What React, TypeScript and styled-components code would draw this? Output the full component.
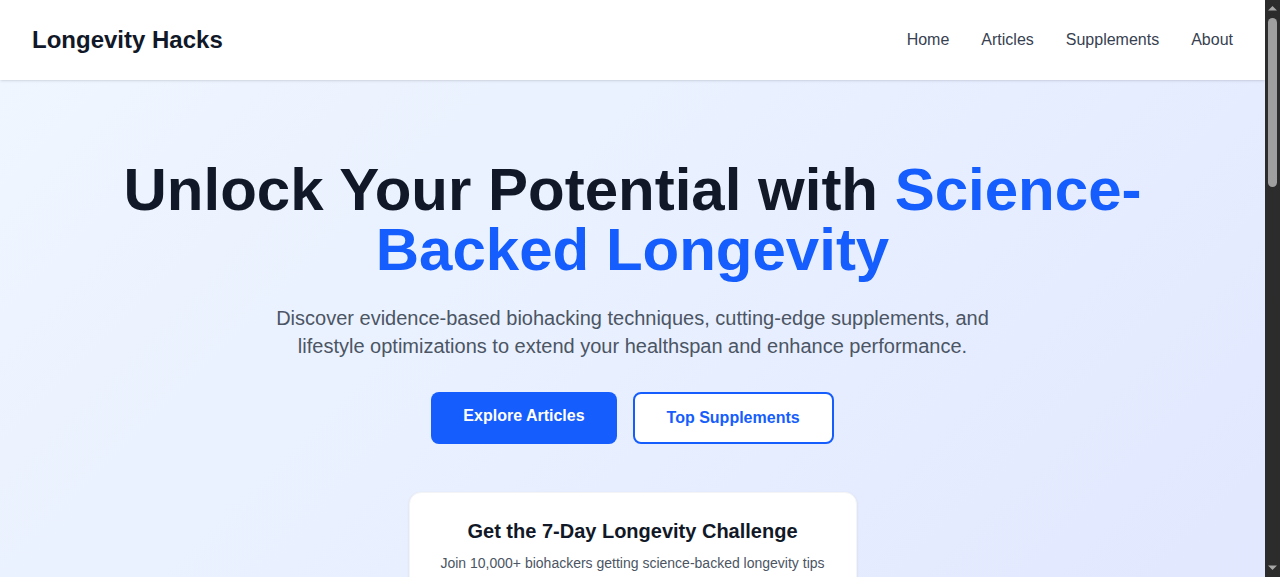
import React from "react";
import styled, { createGlobalStyle } from "styled-components";

const GlobalStyle = createGlobalStyle`
  * { box-sizing: border-box; }
  html, body { margin: 0; padding: 0; }
  body {
    font-family: "Liberation Sans", Arial, sans-serif;
    color: #111827;
    background: #ffffff;
  }
`;

const Page = styled.div`
  margin-right: 15px;
`;

const ScrollRail = styled.div`
  position: fixed;
  top: 0;
  right: 0;
  width: 15px;
  height: 100vh;
  background: #2c2c2c;
  z-index: 10;
`;

const Header = styled.header`
  position: relative;
  z-index: 2;
  height: 80px;
  background: #ffffff;
  box-shadow: 0 1px 3px rgba(0, 0, 0, 0.1), 0 1px 2px -1px rgba(0, 0, 0, 0.1);
  display: flex;
  align-items: center;
  justify-content: space-between;
  padding: 0 32px;
`;

const Logo = styled.div`
  font-size: 24px;
  line-height: 32px;
  font-weight: 700;
  color: #111827;
`;

const Nav = styled.nav`
  display: flex;
  gap: 32px;
`;

const NavLink = styled.a`
  font-size: 16px;
  line-height: 24px;
  color: #374151;
  text-decoration: none;
`;

const Hero = styled.section`
  background: linear-gradient(135deg, #eff6ff 0%, #e0e7ff 100%);
  padding: 80px 16px;
  display: flex;
  flex-direction: column;
  align-items: center;
  text-align: center;
`;

const Title = styled.h1`
  max-width: 1024px;
  margin: 0 0 24px;
  font-size: 60px;
  line-height: 60px;
  font-weight: 700;
  color: #111827;
`;

const Accent = styled.span`
  color: #155dfc;
`;

const Lead = styled.p`
  max-width: 768px;
  margin: 0 0 32px;
  font-size: 20px;
  line-height: 28px;
  color: #4b5563;
`;

const Actions = styled.div`
  display: flex;
  gap: 16px;
  justify-content: center;
`;

const Button = styled.a<{ $variant: "solid" | "outline" }>`
  display: inline-block;
  padding: 12px 32px;
  border-radius: 8px;
  font-size: 16px;
  line-height: 24px;
  font-weight: 700;
  text-decoration: none;
  background: ${(p) => (p.$variant === "solid" ? "#155dfc" : "#ffffff")};
  color: ${(p) => (p.$variant === "solid" ? "#ffffff" : "#155dfc")};
  border: ${(p) => (p.$variant === "solid" ? "none" : "2px solid #155dfc")};
`;

const SignupCard = styled.div`
  margin-top: 48px;
  width: 448px;
  background: #ffffff;
  border: 1px solid #f3f4f6;
  border-radius: 12px;
  padding: 24px;
  box-shadow: 0 1px 3px rgba(0, 0, 0, 0.08), 0 1px 2px -1px rgba(0, 0, 0, 0.06);
`;

const CardTitle = styled.h3`
  margin: 0 0 8px;
  font-size: 20px;
  line-height: 28px;
  font-weight: 700;
  color: #111827;
`;

const CardText = styled.p`
  margin: 0 0 16px;
  font-size: 14px;
  line-height: 20px;
  color: #4b5563;
`;

const Form = styled.form`
  display: flex;
  gap: 8px;
`;

const Input = styled.input`
  flex: 1;
  padding: 10px 14px;
  border: 1px solid #d1d5db;
  border-radius: 8px;
  font-size: 16px;
  font-family: inherit;
`;

const Submit = styled.button`
  padding: 10px 20px;
  border: none;
  border-radius: 8px;
  background: #155dfc;
  color: #ffffff;
  font-weight: 700;
  font-size: 16px;
  font-family: inherit;
`;

const Section = styled.section`
  padding: 64px 32px;
  background: #ffffff;
`;

const SectionTitle = styled.h2`
  margin: 0 0 32px;
  text-align: center;
  font-size: 30px;
  line-height: 36px;
  font-weight: 700;
  color: #111827;
`;

const Grid = styled.div`
  display: grid;
  grid-template-columns: repeat(3, 1fr);
  gap: 24px;
  max-width: 1152px;
  margin: 0 auto;
`;

const ArticleCard = styled.article`
  border: 1px solid #e5e7eb;
  border-radius: 12px;
  overflow: hidden;
  background: #ffffff;
`;

const Thumb = styled.div<{ $tone: string }>`
  height: 245px;
  background: ${(p) => p.$tone};
`;

const ArticleBody = styled.div`
  padding: 20px;
`;

const ArticleTitle = styled.h3`
  margin: 0 0 8px;
  font-size: 18px;
  line-height: 26px;
  color: #111827;
`;

const ArticleText = styled.p`
  margin: 0;
  font-size: 14px;
  line-height: 20px;
  color: #4b5563;
`;

const Footer = styled.footer`
  background: #111827;
  color: #9ca3af;
  padding: 56px 32px;
  text-align: center;
  font-size: 14px;
`;

const articles = [
  { t: "NAD+ and Cellular Energy", d: "How NAD+ precursors may support mitochondrial function as we age.", c: "#dbeafe" },
  { t: "Zone 2 Training Explained", d: "Why low-intensity cardio is a cornerstone of longevity protocols.", c: "#e0e7ff" },
  { t: "Sleep Optimization 101", d: "Evidence-based strategies to improve deep sleep and recovery.", c: "#ede9fe" },
  { t: "Fasting and Autophagy", d: "What the research says about time-restricted eating.", c: "#dbeafe" },
  { t: "Cold Exposure Benefits", d: "Exploring the metabolic effects of deliberate cold exposure.", c: "#e0e7ff" },
  { t: "Creatine Beyond the Gym", d: "Cognitive and healthy-aging benefits of creatine supplementation.", c: "#ede9fe" },
];

function ScrollbarDrawing() {
  return (
    <ScrollRail aria-hidden="true">
      <svg width="15" height="577" viewBox="0 0 15 577">
        <polygon points="3,10.5 7.5,6 12,10.5" fill="#a6a6a6" />
        <rect x="3" y="18" width="9" height="169" rx="4.5" fill="#9f9f9f" />
        <polygon points="3,565.5 12,565.5 7.5,570" fill="#a6a6a6" />
      </svg>
    </ScrollRail>
  );
}

export default function App() {
  return (
    <Page>
      <GlobalStyle />
      <ScrollbarDrawing />
      <Header>
        <Logo>Longevity Hacks</Logo>
        <Nav>
          <NavLink href="#">Home</NavLink>
          <NavLink href="#">Articles</NavLink>
          <NavLink href="#">Supplements</NavLink>
          <NavLink href="#">About</NavLink>
        </Nav>
      </Header>
      <Hero>
        <Title>
          Unlock Your Potential with <Accent>Science-Backed Longevity</Accent>
        </Title>
        <Lead>
          Discover evidence-based biohacking techniques, cutting-edge supplements, and lifestyle
          optimizations to extend your healthspan and enhance performance.
        </Lead>
        <Actions>
          <Button $variant="solid" href="#">Explore Articles</Button>
          <Button $variant="outline" href="#">Top Supplements</Button>
        </Actions>
        <SignupCard>
          <CardTitle>Get the 7-Day Longevity Challenge</CardTitle>
          <CardText>Join 10,000+ biohackers getting science-backed longevity tips</CardText>
          <Form onSubmit={(e) => e.preventDefault()}>
            <Input placeholder="Enter your email" />
            <Submit type="submit">Join</Submit>
          </Form>
        </SignupCard>
      </Hero>
      <Section>
        <SectionTitle>Latest Articles</SectionTitle>
        <Grid>
          {articles.map((a) => (
            <ArticleCard key={a.t}>
              <Thumb $tone={a.c} />
              <ArticleBody>
                <ArticleTitle>{a.t}</ArticleTitle>
                <ArticleText>{a.d}</ArticleText>
              </ArticleBody>
            </ArticleCard>
          ))}
        </Grid>
      </Section>
      <Footer>© 2025 Longevity Hacks. All rights reserved.</Footer>
    </Page>
  );
}
